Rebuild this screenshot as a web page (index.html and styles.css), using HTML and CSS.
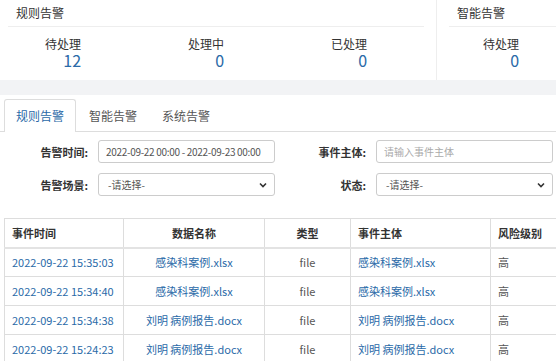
FILE: index.html
```html
<!DOCTYPE html>
<html lang="zh-CN">
<head>
    <meta charset="UTF-8">
    <title>告警中心</title>
    <link rel="stylesheet" href="styles.css">
</head>
<body>
    <!-- Summary cards -->
    <div class="stats">
        <div class="stat-card rule-card">
            <div class="card-title">规则告警</div>
            <div class="stat-row">
                <div class="stat"><span class="stat-label">待处理</span><span class="stat-num">12</span></div>
                <div class="stat"><span class="stat-label">处理中</span><span class="stat-num">0</span></div>
                <div class="stat"><span class="stat-label">已处理</span><span class="stat-num">0</span></div>
            </div>
        </div>
        <div class="stat-card smart-card">
            <div class="card-title">智能告警</div>
            <div class="stat-row smart-row">
                <div class="stat"><span class="stat-label">待处理</span><span class="stat-num">0</span></div>
            </div>
        </div>
    </div>

    <div class="panel">
        <ul class="tabs">
            <li class="tab active">规则告警</li>
            <li class="tab">智能告警</li>
            <li class="tab">系统告警</li>
        </ul>

        <form class="filters">
            <div class="field">
                <label for="alarmTime">告警时间:</label>
                <input type="text" id="alarmTime" class="date-range" value="2022-09-22 00:00 - 2022-09-23 00:00">
            </div>
            <div class="field">
                <label for="subject">事件主体:</label>
                <input type="text" id="subject" placeholder="请输入事件主体">
            </div>
            <div class="field">
                <label for="scene">告警场景:</label>
                <div class="select-wrap">
                    <select id="scene">
                        <option>-请选择-</option>
                    </select>
                    <svg class="chevron" width="8" height="6" viewBox="0 0 8 6"><path d="M1 1.5 L4 4.5 L7 1.5" fill="none" stroke="#333" stroke-width="1.6"/></svg>
                </div>
            </div>
            <div class="field">
                <label for="status">状态:</label>
                <div class="select-wrap">
                    <select id="status">
                        <option>-请选择-</option>
                    </select>
                    <svg class="chevron" width="8" height="6" viewBox="0 0 8 6"><path d="M1 1.5 L4 4.5 L7 1.5" fill="none" stroke="#333" stroke-width="1.6"/></svg>
                </div>
            </div>
        </form>

        <table class="events">
            <thead>
                <tr>
                    <th class="col-time">事件时间</th>
                    <th class="col-name center">数据名称</th>
                    <th class="col-type center">类型</th>
                    <th class="col-subject">事件主体</th>
                    <th class="col-level">风险级别</th>
                </tr>
            </thead>
            <tbody>
                <tr>
                    <td class="link">2022-09-22 15:35:03</td>
                    <td class="link center">感染科案例.xlsx</td>
                    <td class="center">file</td>
                    <td class="link">感染科案例.xlsx</td>
                    <td>高</td>
                </tr>
                <tr>
                    <td class="link">2022-09-22 15:34:40</td>
                    <td class="link center">感染科案例.xlsx</td>
                    <td class="center">file</td>
                    <td class="link">感染科案例.xlsx</td>
                    <td>高</td>
                </tr>
                <tr>
                    <td class="link">2022-09-22 15:34:38</td>
                    <td class="link center">刘明 病例报告.docx</td>
                    <td class="center">file</td>
                    <td class="link">刘明 病例报告.docx</td>
                    <td>高</td>
                </tr>
                <tr>
                    <td class="link">2022-09-22 15:24:23</td>
                    <td class="link center">刘明 病例报告.docx</td>
                    <td class="center">file</td>
                    <td class="link">刘明 病例报告.docx</td>
                    <td>高</td>
                </tr>
            </tbody>
        </table>
    </div>
</body>
</html>
```
FILE: styles.css
```css
body {
    margin: 0;
    height: 361px;
    font-family: "Noto Sans CJK SC", "Noto Sans", sans-serif;
    font-size: 12px;
    color: #333333;
    background-color: #f2f3f5;
    overflow: hidden;
}
.stats {
    display: flex;
    height: 80px;
    background-color: #ffffff;
}
.stat-card {
    box-sizing: border-box;
}
.rule-card {
    width: 437px;
    padding: 0 12px 0 8px;
    border-right: 1px solid #eeeeee;
}
.smart-card {
    flex: 1;
    padding-left: 12px;
}
.card-title {
    height: 26px;
    line-height: 26px;
    padding-left: 8px;
    border-bottom: 1px solid #eeeeee;
}
.stat-row {
    display: grid;
    grid-template-columns: 143px 143px 1fr;
    padding: 10px 0 0 37px;
}
.smart-row {
    grid-template-columns: 1fr;
    padding-left: 34px;
}
.stat {
    display: inline-flex;
    flex-direction: column;
    align-items: flex-end;
    justify-self: start;
    gap: 1px;
}
.stat-label {
    line-height: 14px;
}
.stat-num {
    font-size: 16px;
    line-height: 16px;
    color: #2a6aa8;
}
.panel {
    margin-top: 15px;
    background-color: #ffffff;
    padding-top: 4px;
    height: 262px;
}
.tabs {
    display: flex;
    list-style: none;
    margin: 0;
    padding: 0 0 0 4px;
    border-bottom: 1px solid #dddddd;
}
.tab {
    padding: 0 11px;
    margin-right: 1px;
    margin-bottom: -1px;
    line-height: 31px;
    border: 1px solid transparent;
    border-bottom: none;
    border-radius: 3px 3px 0 0;
    color: #555555;
}
.tab.active {
    color: #2a6aa8;
    background-color: #ffffff;
    border-color: #dddddd;
    padding-bottom: 1px;
}
.filters {
    display: grid;
    grid-template-columns: 278px 278px;
    row-gap: 10px;
    padding-top: 8px;
}
.field {
    display: flex;
    align-items: center;
    gap: 10px;
}
.field label {
    width: 88px;
    text-align: right;
    font-size: 11px;
    font-weight: bold;
    color: #333333;
}
.field input,
.field select {
    box-sizing: border-box;
    width: 177px;
    height: 23px;
    border: 1px solid #cccccc;
    border-radius: 3px;
    padding: 0 7px;
    font-family: inherit;
    font-size: 10px;
    color: #555555;
    background-color: #ffffff;
    outline: none;
}
.field input.date-range {
    letter-spacing: -0.3px;
}
.field input::placeholder {
    color: #aaaaaa;
}
.field select {
    appearance: none;
    padding-left: 9px;
}
.select-wrap {
    position: relative;
    height: 23px;
}
.chevron {
    position: absolute;
    right: 8px;
    top: 9px;
}
.events {
    margin: 22px 0 0 4px;
    border-collapse: collapse;
    width: 556px;
    table-layout: fixed;
    font-size: 11px;
}
.events th,
.events td {
    box-sizing: border-box;
    height: 29px;
    padding: 0 7px;
    border: 1px solid #dddddd;
    text-align: left;
    white-space: nowrap;
}
.events th {
    font-weight: bold;
    border-bottom: 2px solid #e3e3e3;
}
.events td {
    color: #555555;
}
.events .center {
    text-align: center;
}
.events td.link {
    color: #2a6aa8;
}
.col-time { width: 119px; }
.col-name { width: 141px; }
.col-type { width: 86px; }
.col-subject { width: 140px; }
.col-level { width: 70px; }
```
